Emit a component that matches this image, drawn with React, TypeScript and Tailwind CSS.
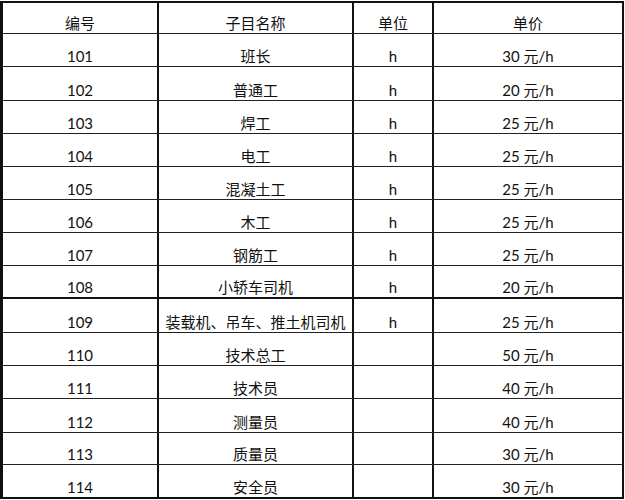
const rows = [
  { id: '101', name: '班长', unit: 'h', price: '30 元/h', h: 'h-[33px]', thick: false },
  { id: '102', name: '普通工', unit: 'h', price: '20 元/h', h: 'h-[34px]', thick: false },
  { id: '103', name: '焊工', unit: 'h', price: '25 元/h', h: 'h-[33px]', thick: false },
  { id: '104', name: '电工', unit: 'h', price: '25 元/h', h: 'h-[33px]', thick: false },
  { id: '105', name: '混凝土工', unit: 'h', price: '25 元/h', h: 'h-[33px]', thick: false },
  { id: '106', name: '木工', unit: 'h', price: '25 元/h', h: 'h-[33px]', thick: false },
  { id: '107', name: '钢筋工', unit: 'h', price: '25 元/h', h: 'h-[33px]', thick: false },
  { id: '108', name: '小轿车司机', unit: 'h', price: '20 元/h', h: 'h-[33px]', thick: true },
  { id: '109', name: '装载机、吊车、推土机司机', unit: 'h', price: '25 元/h', h: 'h-[34px]', thick: false },
  { id: '110', name: '技术总工', unit: '', price: '50 元/h', h: 'h-[33px]', thick: false },
  { id: '111', name: '技术员', unit: '', price: '40 元/h', h: 'h-[33px]', thick: false },
  { id: '112', name: '测量员', unit: '', price: '40 元/h', h: 'h-[34px]', thick: false },
  { id: '113', name: '质量员', unit: '', price: '30 元/h', h: 'h-[32px]', thick: false },
  { id: '114', name: '安全员', unit: '', price: '30 元/h', h: 'h-[32px]', thick: false },
];

function Row({ cells, h, thick, last }: { cells: string[]; h: string; thick: boolean; last: boolean }) {
  const bottom = last ? '' : thick ? 'border-b-2 border-[#111]' : 'border-b border-[#222]';
  return (
    <div className={`grid grid-cols-[156px_195px_80px_188px] ${h} ${bottom}`}>
      {cells.map((c, i) => (
        <div
          key={i}
          className={`flex items-end justify-center leading-[20px] whitespace-nowrap ${i < 3 ? 'border-r-2 border-[#111]' : ''}`}
        >
          {c}
        </div>
      ))}
    </div>
  );
}

export default function App() {
  return (
    <div className="w-[625px] h-[500px] bg-white pt-[1px] text-[15px] text-[#111] font-['Lato','Noto_Sans_CJK_SC',sans-serif]">
      <div className="w-[624px] border-l-[3px] border-t-2 border-r-2 border-b-2 border-[#111]">
        <Row cells={['编号', '子目名称', '单位', '单价']} h="h-[31px]" thick={false} last={false} />
        {rows.map((r, i) => (
          <Row
            key={r.id}
            cells={[r.id, r.name, r.unit, r.price]}
            h={r.h}
            thick={r.thick}
            last={i === rows.length - 1}
          />
        ))}
      </div>
    </div>
  );
}
